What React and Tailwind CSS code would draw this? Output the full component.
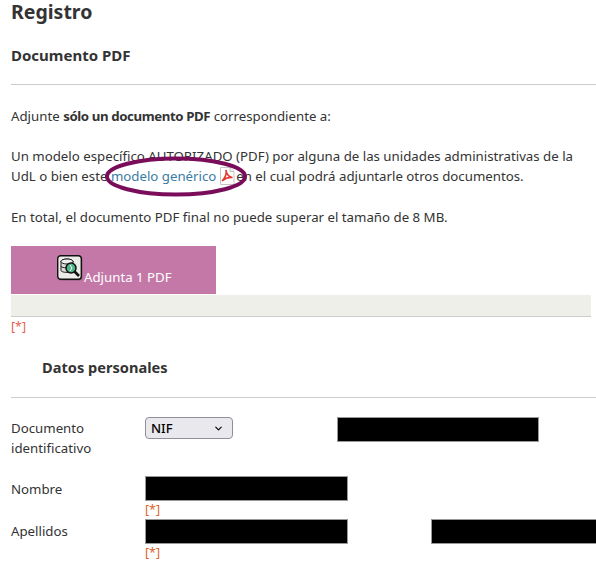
import React from "react";
import { ChevronDown } from "lucide-react";

const Required = ({ className = "" }) => (
  <div className={`text-[12.5px] leading-[14px] ${className}`}>[*]</div>
);

const Redacted = ({ className = "" }) => (
  <div className={`h-[25px] shrink-0 bg-black border border-[#999] ${className}`} />
);

export default function App() {
  return (
    <div className="relative w-[596px] h-[565px] overflow-hidden bg-white text-[13.25px] leading-[20px] text-[#333]" style={{ fontFamily: '"Noto Sans", sans-serif' }}>
      <div className="pl-[11px]">
        <h1 className="text-[19.5px] leading-[24px] font-bold">Registro</h1>
        <h2 className="mt-[20px] text-[15px] leading-[22px] font-bold">Documento PDF</h2>
        <hr className="mt-[18px] border-[#ccc]" />

        <p className="mt-[21px]">Adjunte <strong className="tracking-[-0.4px]">sólo un documento PDF</strong> correspondiente a:</p>
        <p className="mt-[20px] w-[580px]">
          Un modelo específico AUTORIZADO (PDF) por alguna de las unidades administrativas de la UdL o bien este{" "}
          <a className="text-[#3a7ca5]">modelo genérico</a>{" "}
          <svg className="inline-block align-[-4px] -ml-px -mr-[2px]" width="16" height="18" viewBox="0 0 16 18">
            <path d="M1.5 .5H11L15 4.5V17.5H1.5Z" fill="#fff" stroke="#c4c4c4" />
            <path d="M11 .5V4.5H15" fill="#eee" stroke="#c4c4c4" />
            <path d="M3 14C6 11.5 8 6.5 7 3C7 6.5 10 10.5 13.5 10.5C10 10 6 11.5 3 14Z" fill="none" stroke="#e03a2f" strokeWidth="1.6" />
          </svg>{" "}
          en el cual podrá adjuntarle otros documentos.
        </p>
        <p className="mt-[21px]">En total, el documento PDF final no puede superar el tamaño de 8 MB.</p>

        <button className="mt-[19px] flex w-[205px] h-[48px] bg-[#c478a8] text-white pl-[46px]">
          <svg className="mt-[9px] shrink-0" width="26" height="26" viewBox="0 0 26 26">
            <rect x="1.5" y="1.5" width="24" height="24" rx="3" fill="#8a5a78" />
            <rect x=".7" y=".7" width="23.6" height="23.6" rx="3" fill="#ecece8" stroke="#111" strokeWidth="1.4" />
            <ellipse cx="10" cy="6.5" rx="6" ry="2.5" fill="#ddd" stroke="#222" />
            <path d="M4 6.5V15.5C4 18 16 18 16 15.5V6.5M4 11C4 13.5 16 13.5 16 11" fill="#ddd" stroke="#222" />
            <ellipse cx="10" cy="6.5" rx="6" ry="2.5" fill="#eee" stroke="#222" />
            <circle cx="14" cy="13" r="5" fill="#4fb88a" stroke="#111" strokeWidth="1.5" />
            <path d="M13 10L15 13L13 16" fill="none" stroke="#fff" />
            <path d="M17.5 16.5L22 21" stroke="#111" strokeWidth="2.6" />
          </svg>
          <span className="mt-[21px] ml-px">Adjunta 1 PDF</span>
        </button>
        <div className="mt-px w-[580px] h-[22px] bg-[#efefe9] border-b border-[#ccc]" />
        <Required className="mt-[3px] text-[#e8604c]" />

        <h2 className="mt-[22px] ml-[31px] text-[14.6px] leading-[22px] font-bold">Datos personales</h2>
        <hr className="mt-[19px] border-[#ccc]" />

        <div className="mt-[19px] flex">
          <div className="w-[134px] shrink-0 mt-px mb-px">Documento identificativo</div>
          <div className="relative w-[88px] h-[22px] shrink-0">
            <select className="appearance-none w-full h-full pl-[5px] rounded-[4px] bg-[#e9e9ed] border border-[#8f8f9d] text-[13px] font-medium text-black">
              <option>NIF</option>
            </select>
            <ChevronDown className="absolute right-[9px] top-[6px] w-[11px] h-[11px] text-black pointer-events-none" strokeWidth={2.5} />
          </div>
          <Redacted className="ml-[104px] w-[202px]" />
        </div>

        <div className="mt-[17px] flex">
          <div className="w-[134px] shrink-0 mt-[3px]">Nombre</div>
          <div>
            <Redacted className="w-[203px]" />
            <Required className="mt-[2px] text-[#d9662f]" />
          </div>
        </div>

        <div className="mt-[2px] flex">
          <div className="w-[134px] shrink-0 mt-[2px]">Apellidos</div>
          <div>
            <Redacted className="w-[203px]" />
            <Required className="mt-[2px] text-[#d9662f]" />
          </div>
          <Redacted className="ml-[83px] w-[170px]" />
        </div>
      </div>

      {/* hand drawn circle over the link */}
      <svg className="absolute left-[100px] top-[150px]" width="150" height="53" viewBox="0 0 150 53">
        <ellipse cx="76" cy="26.5" rx="69" ry="18" fill="none" stroke="#7a0d5a" strokeWidth="4" />
      </svg>
    </div>
  );
}
